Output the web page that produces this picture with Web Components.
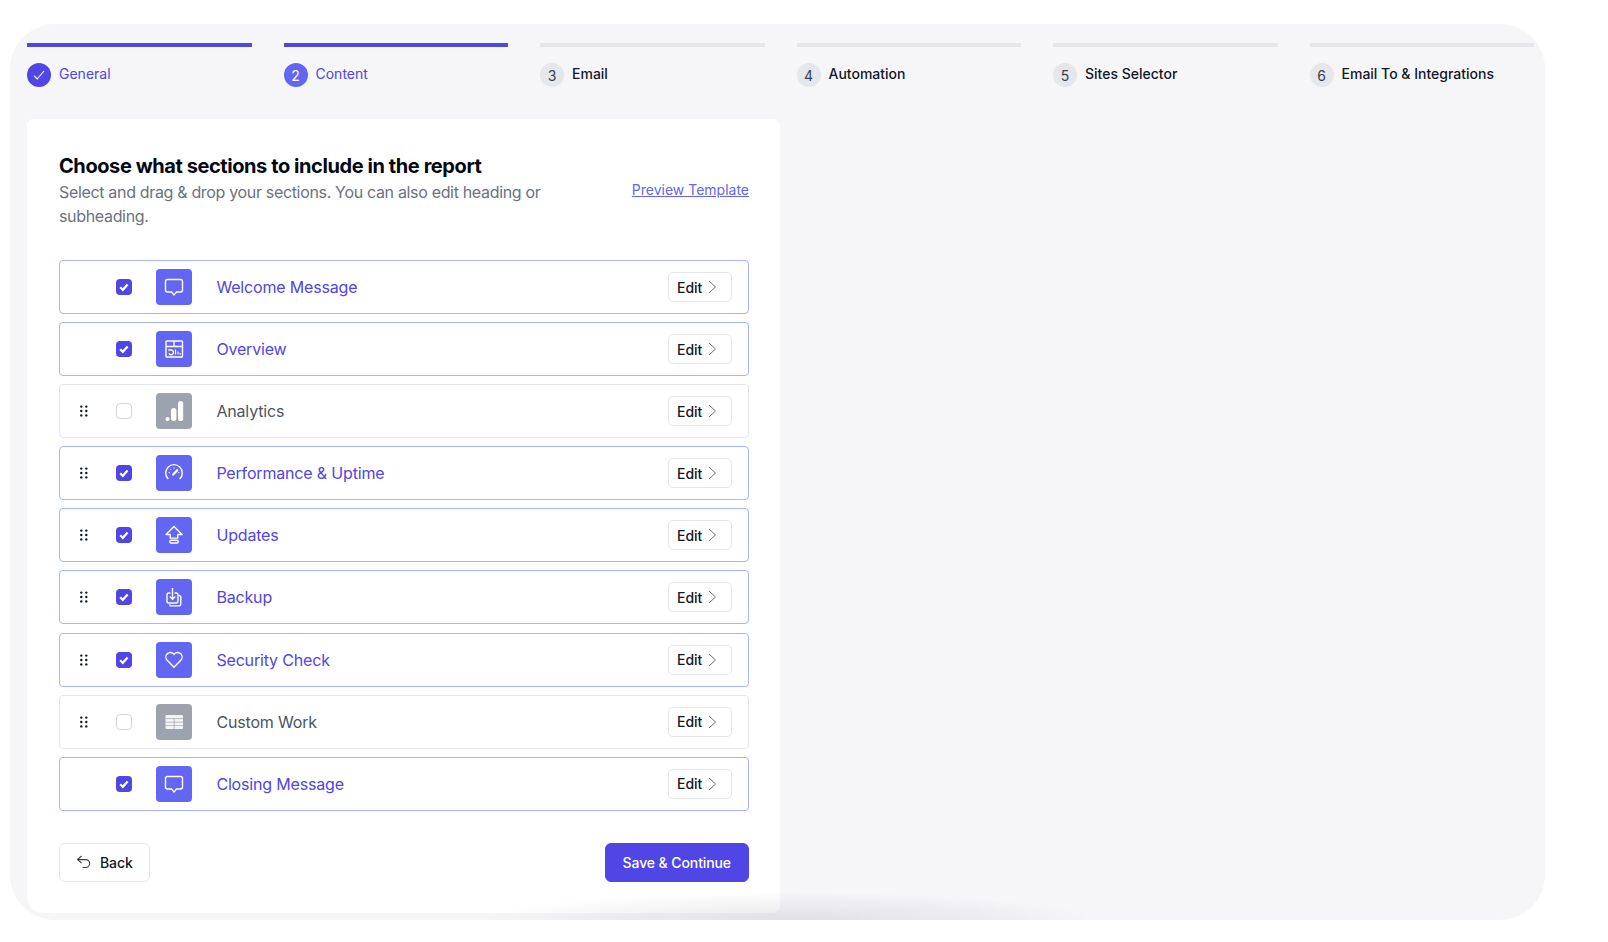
<!DOCTYPE html>
<html lang="en">
<head>
<meta charset="utf-8">
<title>Report sections</title>
<style>
  html, body { margin: 0; background: #fff; }
  body { font-family: Inter, "Liberation Sans", sans-serif; }
</style>
</head>
<body>
<report-wizard>
  <wizard-steps>
    <wizard-step state="done" number="1">General</wizard-step>
    <wizard-step state="current" number="2">Content</wizard-step>
    <wizard-step number="3">Email</wizard-step>
    <wizard-step number="4">Automation</wizard-step>
    <wizard-step number="5">Sites Selector</wizard-step>
    <wizard-step number="6">Email To &amp; Integrations</wizard-step>
  </wizard-steps>
  <sections-card>
    <section-row checked locked icon="chat">Welcome Message</section-row>
    <section-row checked locked icon="overview">Overview</section-row>
    <section-row icon="analytics">Analytics</section-row>
    <section-row checked icon="gauge">Performance &amp; Uptime</section-row>
    <section-row checked icon="updates">Updates</section-row>
    <section-row checked icon="backup">Backup</section-row>
    <section-row checked icon="heart">Security Check</section-row>
    <section-row icon="table">Custom Work</section-row>
    <section-row checked locked icon="chat">Closing Message</section-row>
  </sections-card>
</report-wizard>

<script>
const icons = {
  chat: `<path d="M11.5 10.5h13a2 2 0 0 1 2 2v8.5a2 2 0 0 1-2 2h-4l-2.5 3-2.5-3h-4a2 2 0 0 1-2-2v-8.5a2 2 0 0 1 2-2z"/>`,
  overview: `<rect x="10" y="10" width="16.5" height="16" rx=".8"/><path d="M10 15.5h16.5M18 10v5.5"/><path d="M12.2 19h3.3a2.4 2.4 0 1 1-2.6 3.4" stroke-width="1.3"/><path d="M19.5 18.5v5M22 20.5v3M24.2 22v1.5" stroke-width="1.2"/>`,
  analytics: `<g fill="#fff" stroke="none"><circle cx="11.5" cy="26" r="2"/><rect x="15" y="15" width="5.4" height="13" rx="2.7"/><rect x="22" y="8" width="5.2" height="20" rx="2.6"/></g>`,
  gauge: `<path d="M12.3 24a8.3 8.3 0 1 1 11.4 0"/><path d="M18 12.4v1.2M12.6 17.6h1.2M22.2 17.6h1.2M14.4 14l.8.8" stroke-width="1"/><path d="M17.2 19.6l4-4.4" stroke-width="2.2" stroke-linecap="round"/>`,
  updates: `<path d="M18 9.5l8 8h-4.2v3.6h-7.6v-3.6H10z" stroke-linejoin="round"/><rect x="13.8" y="23.2" width="8.4" height="2.8" rx="1.2"/>`,
  backup: `<path d="M14.5 14h-1.7a1.8 1.8 0 0 0-1.8 1.8v6.4a1.8 1.8 0 0 0 1.8 1.8h7.4a1.8 1.8 0 0 0 1.8-1.8v-6.4a1.8 1.8 0 0 0-1.8-1.8h-1.7"/><path d="M22.8 16.5a1.8 1.8 0 0 1 2 1.8v6.4a2.2 2.2 0 0 1-2.2 2.2h-7.2a1.8 1.8 0 0 1-1.8-1.6"/><path d="M16.5 9v11M13.8 17.4l2.7 2.8 2.7-2.8"/>`,
  heart: `<path d="M18 25.2l-6.8-6.9a4.7 4.7 0 0 1 0-6.5 4.5 4.5 0 0 1 6.4 0l.4.5.4-.5a4.5 4.5 0 0 1 6.4 0 4.7 4.7 0 0 1 0 6.5z"/>`,
  table: `<rect x="9.5" y="11" width="17.5" height="14" rx="1" fill="#f3f4f6" stroke="none"/><path d="M9.5 14.6h17.5M9.5 18.2h17.5M9.5 21.6h17.5M18.2 14.6V25" stroke="#9ca3af" stroke-width=".7"/>`
};

class ReportWizard extends HTMLElement {
  constructor() {
    super();
    this.attachShadow({ mode: "open" });
    this.shadowRoot.innerHTML = `
      <style>
        :host {
          display: block;
          position: relative;
          box-sizing: border-box;
          width: 1535px;
          height: 896px;
          margin: 24px 0 0 10px;
          padding: 19px 11px 0 17px;
          background: #f6f6f9;
          border-radius: 45px;
          overflow: hidden;
        }
        .shade {
          position: absolute;
          left: 470px;
          bottom: 0;
          width: 620px;
          height: 28px;
          background: radial-gradient(ellipse 50% 100% at 50% 100%, rgba(70, 70, 95, .13), rgba(70, 70, 95, 0) 100%);
          pointer-events: none;
        }
      </style>
      <slot></slot>
      <div class="shade"></div>
    `;
  }
}

class WizardSteps extends HTMLElement {
  constructor() {
    super();
    this.attachShadow({ mode: "open" });
    this.shadowRoot.innerHTML = `
      <style>
        :host {
          display: grid;
          grid-template-columns: repeat(6, 1fr);
          column-gap: 32px;
          margin-bottom: 32px;
        }
      </style>
      <slot></slot>
    `;
  }
}

class WizardStep extends HTMLElement {
  connectedCallback() {
    if (this.shadowRoot) return;
    const state = this.getAttribute("state") || "todo";
    const mark = state === "done"
      ? `<svg width="14" height="14" viewBox="0 0 14 14" fill="none" stroke="#fff" stroke-width="1.1"><path d="M2 7.6l3.2 3.4L12 3"/></svg>`
      : this.getAttribute("number");
    this.attachShadow({ mode: "open" });
    this.shadowRoot.innerHTML = `
      <style>
        :host {
          display: block;
          font-size: 14px;
          font-weight: 500;
          line-height: 20px;
          color: #111827;
        }
        .bar { height: 4px; background: #e5e7eb; margin-bottom: 16px; }
        .body { display: flex; gap: 8px; }
        .circle {
          flex: none;
          display: flex;
          align-items: center;
          justify-content: center;
          width: 24px;
          height: 24px;
          border-radius: 50%;
          background: #e5e7eb;
          color: #374151;
          font-weight: 400;
          padding-top: 1px;
          box-sizing: border-box;
        }
        :host([state]) .bar { background: #4f46e5; }
        :host([state]) .label { color: #4f46e5; font-weight: 400; }
        :host([state="done"]) .circle { background: #4f46e5; padding: 0; }
        :host([state="current"]) .circle { background: #6366f1; color: #fff; }
        .label { padding-top: .5px; }
      </style>
      <div class="bar"></div>
      <div class="body">
        <span class="circle">${mark}</span>
        <span class="label"><slot></slot></span>
      </div>
    `;
  }
}

class SectionsCard extends HTMLElement {
  constructor() {
    super();
    this.attachShadow({ mode: "open" });
    this.shadowRoot.innerHTML = `
      <style>
        :host {
          display: block;
          box-sizing: border-box;
          width: 753px;
          height: 794px;
          padding: 32px 31px 0 32px;
          background: #fff;
          border-radius: 7px 7px 7px 16px;
        }
        header { display: flex; justify-content: space-between; margin-bottom: 32px; }
        .intro { width: 520px; }
        h2 { margin: 1px 0 0; font-size: 20px; line-height: 28px; font-weight: 700; letter-spacing: -.42px; color: #030712; }
        p { margin: 0; font-size: 16px; line-height: 24px; letter-spacing: -.33px; color: #6b7280; }
        a { margin-top: 29px; font-size: 14px; line-height: 20px; height: 20px; color: #6366f1; text-decoration: underline; }
        .list { display: flex; flex-direction: column; gap: 8.1px; }
        footer { display: flex; justify-content: space-between; margin-top: 32px; }
      </style>
      <header>
        <div class="intro">
          <h2>Choose what sections to include in the report</h2>
          <p>Select and drag &amp; drop your sections. You can also edit heading or subheading.</p>
        </div>
        <a href="#">Preview Template</a>
      </header>
      <div class="list"><slot></slot></div>
      <footer>
        <wizard-button>
          <svg slot="icon" width="16" height="14" viewBox="0 0 16 14" fill="none" stroke="#374151" stroke-width="1.1"><path d="M5.5 1L1.5 4.6l4 3.4M1.5 4.6h8.2a3.9 3.9 0 0 1 0 7.9H6.5"/></svg>
          Back
        </wizard-button>
        <wizard-button primary>Save &amp; Continue</wizard-button>
      </footer>
    `;
  }
}

class SectionRow extends HTMLElement {
  connectedCallback() {
    if (this.shadowRoot) return;
    const checked = this.hasAttribute("checked");
    const handle = this.hasAttribute("locked") ? "" : `
      <svg width="8" height="12" viewBox="0 0 8 12" fill="#111827">
        <circle cx="1.3" cy="1.6" r="1.2"/><circle cx="6.3" cy="1.6" r="1.2"/>
        <circle cx="1.3" cy="6" r="1.2"/><circle cx="6.3" cy="6" r="1.2"/>
        <circle cx="1.3" cy="10.4" r="1.2"/><circle cx="6.3" cy="10.4" r="1.2"/>
      </svg>`;
    const tick = checked ? `
      <svg width="16" height="16" viewBox="0 0 16 16" fill="none" stroke="#fff" stroke-width="2.2"><path d="M4.2 8.3l2.6 2.5 4.8-5.4"/></svg>` : "";
    this.attachShadow({ mode: "open" });
    this.shadowRoot.innerHTML = `
      <style>
        :host {
          display: flex;
          align-items: center;
          box-sizing: border-box;
          height: 54px;
          padding: 0 16px 0 20.4px;
          background: #fff;
          border: 1px solid #e5e7eb;
          border-radius: 4px;
          font-size: 16px;
          letter-spacing: -.17px;
          color: #4b5563;
        }
        :host([checked]) { border-color: #a5b4fc; color: #4f46e5; }
        .handle { width: 8px; height: 12px; margin-right: 28px; display: flex; }
        .check {
          width: 16px;
          height: 16px;
          box-sizing: border-box;
          border: 1px solid #d1d5db;
          border-radius: 4px;
          background: #fff;
          margin-right: 24px;
        }
        :host([checked]) .check { background: #4f46e5; border: 0; }
        .check svg { display: block; }
        .tile {
          flex: none;
          width: 36px;
          height: 36px;
          border-radius: 4px;
          background: #9ca3af;
          margin-right: 24px;
        }
        :host([checked]) .tile { background: #6366f1; }
        .tile svg { display: block; }
        .label { flex: 1; }
      </style>
      <span class="handle">${handle}</span>
      <span class="check">${tick}</span>
      <span class="tile">
        <svg width="36" height="36" viewBox="0 0 36 36" fill="none" stroke="#fff" stroke-width="1.4">${icons[this.getAttribute("icon")]}</svg>
      </span>
      <span class="label"><slot></slot></span>
      <edit-button></edit-button>
    `;
  }
}

class EditButton extends HTMLElement {
  constructor() {
    super();
    this.attachShadow({ mode: "open" });
    this.shadowRoot.innerHTML = `
      <style>
        :host {
          display: flex;
          align-items: center;
          gap: 6px;
          box-sizing: border-box;
          width: 64px;
          height: 30px;
          padding-left: 8px;
          background: #fff;
          border: 1px solid #e5e7eb;
          border-radius: 5px;
          font-size: 14px;
          font-weight: 500;
          letter-spacing: 0;
          color: #111827;
        }
        svg { display: block; }
      </style>
      Edit
      <svg width="9" height="14" viewBox="0 0 9 14" fill="none" stroke="#6b7280" stroke-width="1"><path d="M1 1l6.5 6L1 13"/></svg>
    `;
  }
}

class WizardButton extends HTMLElement {
  constructor() {
    super();
    this.attachShadow({ mode: "open" });
    this.shadowRoot.innerHTML = `
      <style>
        :host {
          display: inline-flex;
          align-items: center;
          gap: 8px;
          box-sizing: border-box;
          height: 39px;
          padding: 0 16px;
          background: #fff;
          border: 1px solid #e5e7eb;
          border-radius: 6px;
          font-size: 14px;
          font-weight: 500;
          letter-spacing: -.1px;
          color: #111827;
        }
        :host([primary]) { padding: 0 17px; background: #4f46e5; border-color: #4f46e5; color: #fff; }
      </style>
      <slot name="icon"></slot>
      <slot></slot>
    `;
  }
}

customElements.define("report-wizard", ReportWizard);
customElements.define("wizard-steps", WizardSteps);
customElements.define("wizard-step", WizardStep);
customElements.define("wizard-button", WizardButton);
customElements.define("edit-button", EditButton);
customElements.define("section-row", SectionRow);
customElements.define("sections-card", SectionsCard);
</script>
</body>
</html>
